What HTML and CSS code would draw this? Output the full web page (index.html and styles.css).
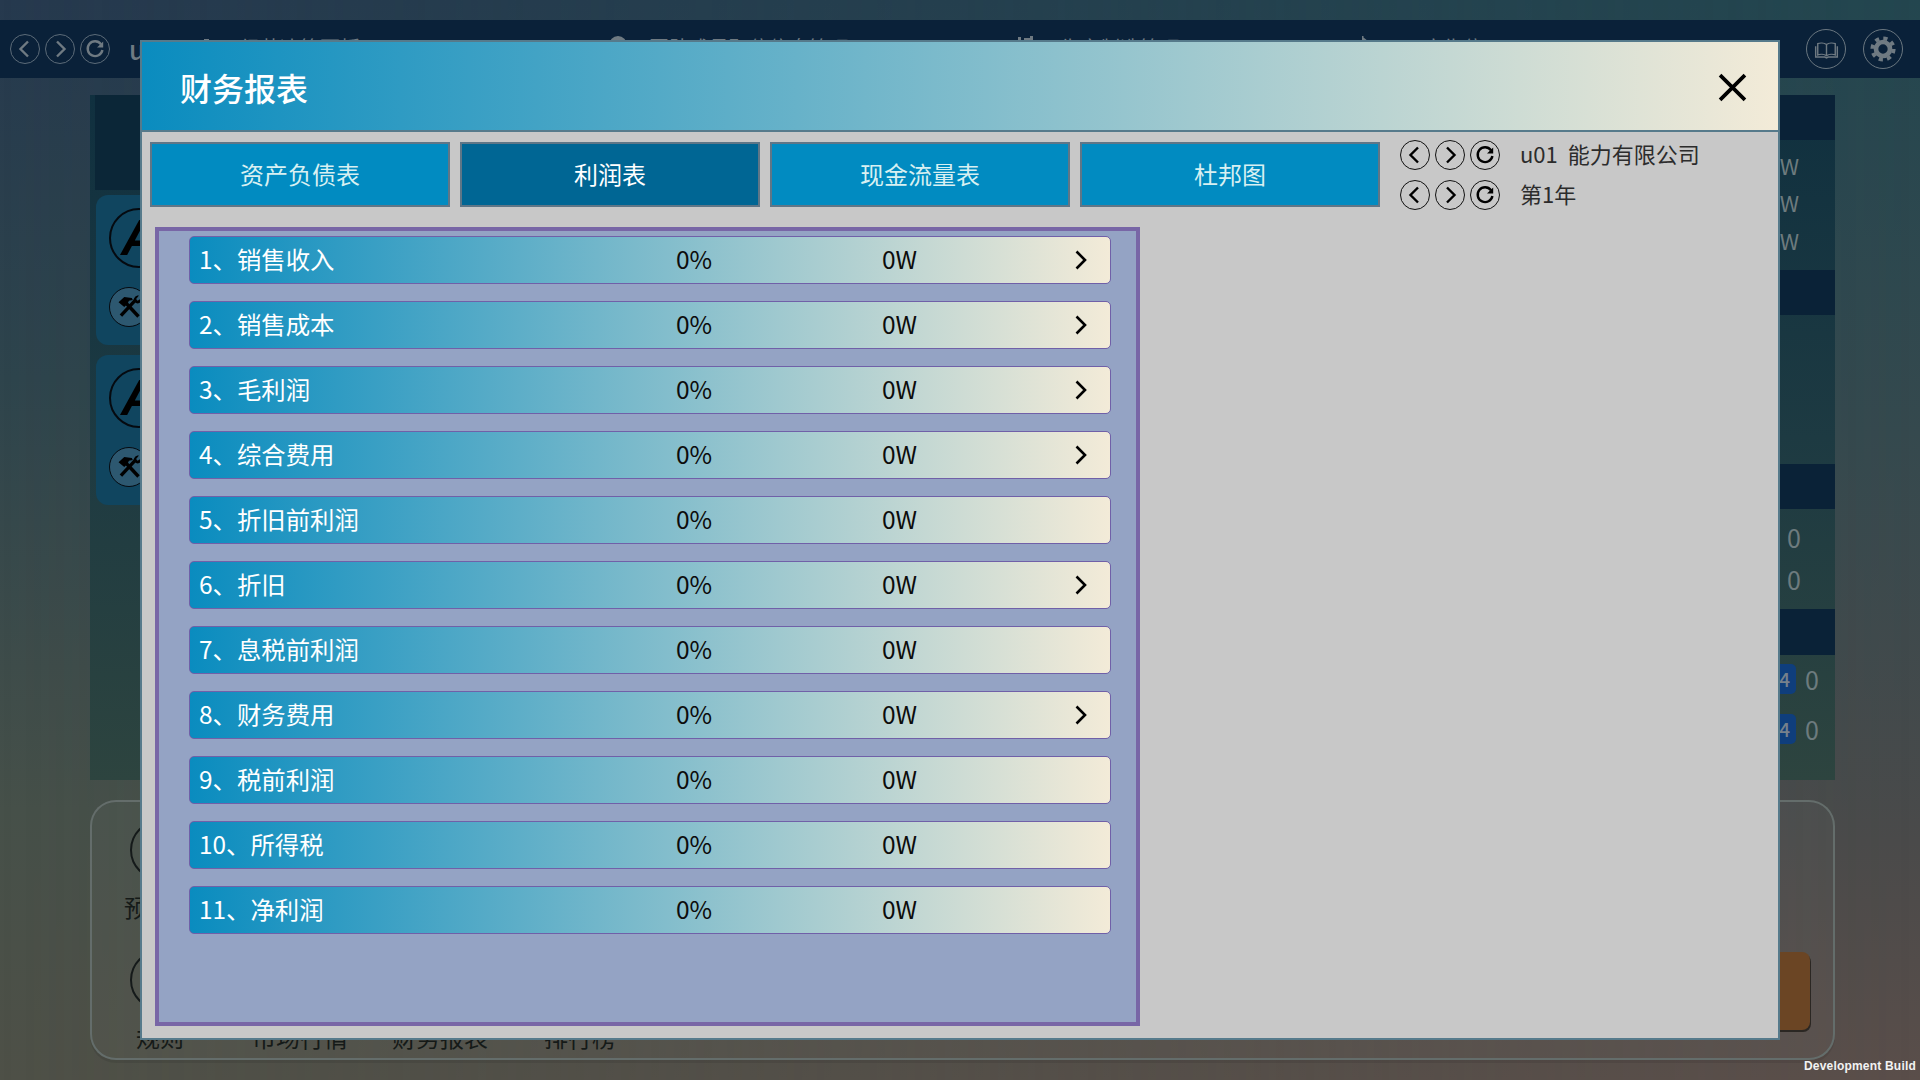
FILE: index.html
```html
<!DOCTYPE html>
<html lang="zh-CN">
<head>
<meta charset="utf-8">
<title>财务报表</title>
<link rel="stylesheet" href="styles.css">
</head>
<body>
<svg class="defs" width="0" height="0" aria-hidden="true">
  <symbol id="i-left" viewBox="0 0 30 30"><path d="M18 7.5 10.5 15 18 22.5" fill="none" stroke="currentColor" stroke-width="2.4"/></symbol>
  <symbol id="i-right" viewBox="0 0 30 30"><path d="M12 7.5 19.5 15 12 22.5" fill="none" stroke="currentColor" stroke-width="2.4"/></symbol>
  <symbol id="i-refresh" viewBox="0 0 30 30"><path d="M21 10.2A7.4 7.4 0 1 0 22.4 16" fill="none" stroke="currentColor" stroke-width="2.4"/><path d="M23.2 7.4V13.6H17Z" fill="currentColor"/></symbol>
  <symbol id="i-tools" viewBox="0 0 40 40"><path d="M9 15 15 9.500 23 10.500 24 12.500 20 13.500 18 17 15 20Z" fill="currentColor"/><path d="M16.500 15.500 30 30" fill="none" stroke="currentColor" stroke-width="3.600"/><path d="M27 12.500 11.500 29" fill="none" stroke="currentColor" stroke-width="3.600"/><path d="M30.500 8 27.500 11.500 29 13.500 32 11.500 33 13C32.500 16 29.500 17 27 15.500L25 13C25 10 27.500 7.500 30.500 8Z" fill="currentColor"/></symbol>
</svg>

<div class="stage">
  <div class="strip"></div>

  <header class="nav">
    <div class="nav-left">
      <span class="circle nav-circle"><svg class="ico"><use href="#i-left"/></svg></span>
      <span class="circle nav-circle"><svg class="ico"><use href="#i-right"/></svg></span>
      <span class="circle nav-circle"><svg class="ico"><use href="#i-refresh"/></svg></span>
    </div>
    <div class="nav-user">u01</div>
    <div class="nav-item">
      <svg class="nav-ico" viewBox="0 0 30 30"><path d="M8 12 12 8V6h5V8l5 4Z" fill="currentColor"/></svg><span>经营决策面板</span>
    </div>
    <div class="nav-item">
      <svg class="nav-ico" viewBox="0 0 30 30"><path d="M17 3a9 9 0 0 0-9 9h5a4 4 0 0 1 8 0h5a9 9 0 0 0-9-9Z" fill="currentColor"/></svg><span>团队成员职位信息管理</span>
    </div>
    <div class="nav-item">
      <svg class="nav-ico" viewBox="0 0 30 30"><path d="M0 14 3 7h3V4h3v3h3V5h6V3h3v4h5l4 7Z" fill="currentColor"/></svg><span>生产制造管理</span>
    </div>
    <div class="nav-item nav-item-last">
      <svg class="nav-ico" viewBox="0 0 30 30"><path d="M6 3h1.500v1.500l7 5.500H7.500v5H6Z" fill="currentColor"/></svg><span>广告位</span>
    </div>
    <div class="nav-right">
      <span class="circle nav-big">
        <svg class="book-ico" viewBox="0 0 30 30"><path d="M15 9C12 7 7 7 4.500 8V21.500C7 20.500 12 20.500 15 22.500 18 20.500 23 20.500 25.500 21.500V8C23 7 18 7 15 9ZM15 9V22.500M2 11V24H13L15 25 17 24H28V11" fill="none" stroke="currentColor" stroke-width="1.700"/></svg>
      </span>
      <span class="circle nav-big">
        <svg class="nav-big-ico" viewBox="0 0 30 30"><circle cx="15" cy="15" r="7.500" fill="none" stroke="currentColor" stroke-width="5"/><circle cx="15" cy="15" r="11.500" fill="none" stroke="currentColor" stroke-width="4" stroke-dasharray="4.500 4.530"/></svg>
      </span>
    </div>
  </header>

  <main class="board">
    <section class="col-left">
      <div class="left-head"></div>
      <div class="card">
        <span class="circle badge-a">A</span>
        <span class="circle badge-tool"><svg class="tool-ico"><use href="#i-tools"/></svg></span>
      </div>
      <div class="card">
        <span class="circle badge-a">A</span>
        <span class="circle badge-tool"><svg class="tool-ico"><use href="#i-tools"/></svg></span>
      </div>
    </section>
    <section class="col-right">
      <div class="band"></div>
      <div class="sect sect-w"><span>W</span><span>W</span><span>W</span></div>
      <div class="band"></div>
      <div class="sect sect-empty"></div>
      <div class="band"></div>
      <div class="sect sect-zero"><span>0</span><span>0</span></div>
      <div class="band band-last"></div>
      <div class="sect sect-badge">
        <div class="lvl"><span class="lvl-tag">4</span><span class="lvl-num">0</span></div>
        <div class="lvl"><span class="lvl-tag">4</span><span class="lvl-num">0</span></div>
      </div>
    </section>
  </main>

  <section class="dock">
    <div class="dock-grid">
      <div class="dock-row">
        <div class="dock-item"><span class="circle dock-circle"></span><span class="dock-label">预算表</span></div>
      </div>
      <div class="dock-row">
        <div class="dock-item"><span class="circle dock-circle"></span><span class="dock-label">规则</span></div>
        <div class="dock-item"><span class="circle dock-circle"></span><span class="dock-label">市场行情</span></div>
        <div class="dock-item"><span class="circle dock-circle"></span><span class="dock-label">财务报表</span></div>
        <div class="dock-item"><span class="circle dock-circle"></span><span class="dock-label">排行榜</span></div>
      </div>
    </div>
    <div class="dock-action"></div>
  </section>

  <div class="modal">
    <div class="modal-head">
      <h1 class="modal-title">财务报表</h1>
      <svg class="modal-close" viewBox="0 0 28 28"><path d="M2 2 26 26M26 2 2 26" fill="none" stroke="#000" stroke-width="3.600"/></svg>
    </div>
    <div class="modal-body">
      <div class="modal-top">
        <nav class="tabs">
          <div class="tab">资产负债表</div>
          <div class="tab tab-active">利润表</div>
          <div class="tab">现金流量表</div>
          <div class="tab">杜邦图</div>
        </nav>
        <div class="pickers">
          <div class="picker">
            <span class="circle pick-circle"><svg class="ico"><use href="#i-left"/></svg></span>
            <span class="circle pick-circle"><svg class="ico"><use href="#i-right"/></svg></span>
            <span class="circle pick-circle"><svg class="ico"><use href="#i-refresh"/></svg></span>
            <span class="pick-text">u01&nbsp;&nbsp;能力有限公司</span>
          </div>
          <div class="picker">
            <span class="circle pick-circle"><svg class="ico"><use href="#i-left"/></svg></span>
            <span class="circle pick-circle"><svg class="ico"><use href="#i-right"/></svg></span>
            <span class="circle pick-circle"><svg class="ico"><use href="#i-refresh"/></svg></span>
            <span class="pick-text">第1年</span>
          </div>
        </div>
      </div>
      <div class="report">
        <div class="row"><span class="row-name">1、销售收入</span><span class="row-val">0%</span><span class="row-val">0W</span><svg class="row-arrow" viewBox="0 0 12 20"><path d="M1.500 1.500 10 10 1.500 18.500" fill="none" stroke="#000" stroke-width="2.600"/></svg></div>
        <div class="row"><span class="row-name">2、销售成本</span><span class="row-val">0%</span><span class="row-val">0W</span><svg class="row-arrow" viewBox="0 0 12 20"><path d="M1.500 1.500 10 10 1.500 18.500" fill="none" stroke="#000" stroke-width="2.600"/></svg></div>
        <div class="row"><span class="row-name">3、毛利润</span><span class="row-val">0%</span><span class="row-val">0W</span><svg class="row-arrow" viewBox="0 0 12 20"><path d="M1.500 1.500 10 10 1.500 18.500" fill="none" stroke="#000" stroke-width="2.600"/></svg></div>
        <div class="row"><span class="row-name">4、综合费用</span><span class="row-val">0%</span><span class="row-val">0W</span><svg class="row-arrow" viewBox="0 0 12 20"><path d="M1.500 1.500 10 10 1.500 18.500" fill="none" stroke="#000" stroke-width="2.600"/></svg></div>
        <div class="row"><span class="row-name">5、折旧前利润</span><span class="row-val">0%</span><span class="row-val">0W</span></div>
        <div class="row"><span class="row-name">6、折旧</span><span class="row-val">0%</span><span class="row-val">0W</span><svg class="row-arrow" viewBox="0 0 12 20"><path d="M1.500 1.500 10 10 1.500 18.500" fill="none" stroke="#000" stroke-width="2.600"/></svg></div>
        <div class="row"><span class="row-name">7、息税前利润</span><span class="row-val">0%</span><span class="row-val">0W</span></div>
        <div class="row"><span class="row-name">8、财务费用</span><span class="row-val">0%</span><span class="row-val">0W</span><svg class="row-arrow" viewBox="0 0 12 20"><path d="M1.500 1.500 10 10 1.500 18.500" fill="none" stroke="#000" stroke-width="2.600"/></svg></div>
        <div class="row"><span class="row-name">9、税前利润</span><span class="row-val">0%</span><span class="row-val">0W</span></div>
        <div class="row"><span class="row-name">10、所得税</span><span class="row-val">0%</span><span class="row-val">0W</span></div>
        <div class="row"><span class="row-name">11、净利润</span><span class="row-val">0%</span><span class="row-val">0W</span></div>
      </div>
    </div>
  </div>

  <div class="dev-build">Development Build</div>
</div>
</body>
</html>
```

FILE: styles.css
```css
* { box-sizing: border-box; }
html, body { margin: 0; padding: 0; }
body { font-family: "Noto Sans CJK SC", "Noto Sans", sans-serif; line-height: 1; }
.defs { position: absolute; }

.stage {
  position: relative;
  isolation: isolate;
  width: 1920px;
  height: 1080px;
  overflow: hidden;
  display: flex;
  flex-direction: column;
  background: linear-gradient(180deg, #26394e 0%, #2e444c 35%, #465049 75%, #4e5047 100%);
}
.stage::before {
  content: "";
  position: absolute;
  inset: 0;
  z-index: -1;
  background: linear-gradient(180deg, #23464f 0%, #35494e 40%, #4a4a4a 78%, #5a4e4a 100%);
  -webkit-mask-image: linear-gradient(90deg, transparent, #000);
  mask-image: linear-gradient(90deg, transparent, #000);
}

.strip { height: 20px; flex: none; }

.circle {
  display: flex;
  align-items: center;
  justify-content: center;
  border-radius: 50%;
  flex: none;
}
.ico { width: 30px; height: 30px; display: block; flex: none; }

/* top bar */
.nav {
  flex: none;
  height: 58px;
  background: #0a2139;
  color: #6f7a82;
  display: grid;
  grid-template-columns: 129px 63px 409px 411px 344px 1fr auto;
  align-items: center;
}
.nav-left { display: flex; gap: 5px; padding-left: 10px; }
.nav-circle { width: 30px; height: 30px; border: 1px solid #5c6b78; margin: -1px 0 0; }
.nav-user { font-size: 26px; font-weight: 500; }
.nav-item { display: flex; align-items: center; gap: 18px; font-size: 20px; margin-top: -2px; }
.nav-item-last { gap: 37px; }
.nav-ico { width: 30px; height: 30px; flex: none; align-self: flex-start; margin-top: -1px; }
.nav-right { display: flex; gap: 17px; padding-right: 17px; grid-column: 7; }
.nav-big { width: 40px; height: 40px; border: 1px solid #6a7780; }
.nav-big-ico { width: 28px; height: 28px; }
.book-ico { width: 25px; height: 25px; }

/* main board behind the dialog */
.board {
  flex: none;
  margin: 17px 85px 0 90px;
  height: 685px;
  display: flex;
  background: linear-gradient(180deg, #10303f 0%, #1d3a42 50%, #2d443f 100%);
}
.col-left { flex: 1; padding: 0 0 0 5px; }
.left-head { height: 95px; background: #0b2637; margin-bottom: 5px; }
.card {
  margin: 0 0 10px 1px;
  width: 500px;
  height: 150px;
  padding: 13px;
  background: #10455f;
  border-radius: 12px;
  display: flex;
  flex-direction: column;
  gap: 19px;
}
.badge-a {
  width: 60px;
  height: 60px;
  border: 2px solid #050a10;
  color: #000;
  font: italic bold 50px "Liberation Sans", sans-serif;
}
.badge-tool {
  width: 40px;
  height: 40px;
  border: 1px solid #050a10;
  background: #2d5870;
  color: #000;
}
.tool-ico { width: 38px; height: 38px; display: block; flex: none; }

.col-right { width: 300px; display: flex; flex-direction: column; color: #6d7b7e; }
.band { height: 45px; background: #0a2237; flex: none; }
.band-last { height: 46px; }
.sect { display: flex; flex-direction: column; justify-content: center; align-items: flex-end; }
.sect-w { height: 130px; padding: 0 36px 4px 0; font-size: 22px; line-height: 37.5px; }
.sect-empty { height: 149px; }
.sect-zero { height: 100px; padding: 0 34px 2px 0; font-size: 25px; line-height: 42px; }
.sect-badge { height: 124px; padding: 9px 16px 0 0; justify-content: flex-start; gap: 20px; }
.lvl { display: flex; align-items: center; gap: 9px; }
.lvl-tag {
  width: 30px;
  height: 30px;
  line-height: 30px;
  padding-right: 6px;
  text-align: right;
  font-size: 19px;
  font-weight: 500;
  border-radius: 5px;
  background: #0f3e7c;
  color: #77818c;
}
.lvl-num { font-size: 25px; }

/* bottom dock */
.dock {
  flex: none;
  margin: 20px 85px 0 90px;
  height: 260px;
  padding: 20px 25px 0 0;
  border-radius: 26px;
  box-shadow: inset 0 0 0 2px #646d6b, 0 3px 0 rgba(0,0,0,.08);
  background: rgba(255,255,255,.025);
  display: flex;
  justify-content: space-between;
}
.dock-grid { display: flex; flex-direction: column; gap: 27px; }
.dock-row { display: flex; height: 103px; }
.dock-item { width: 140px; display: flex; flex-direction: column; align-items: center; gap: 13px; }
.dock-circle { width: 60px; height: 60px; border: 2px solid #151a1a; }
.dock-label { font-size: 24px; line-height: 28px; color: #151a18; white-space: nowrap; }
.dock-action {
  align-self: flex-end;
  width: 200px;
  height: 78px;
  margin-bottom: 30px;
  background: #6b4524;
  border-radius: 8px;
  box-shadow: 1px 2px 0 #2b2723;
}

/* dialog */
.modal {
  position: absolute;
  left: 140px;
  top: 40px;
  width: 1640px;
  height: 1000px;
  border: 2px solid #567a8b;
  background: #c8c8c8;
  display: flex;
  flex-direction: column;
}
.modal-head {
  flex: none;
  height: 90px;
  border-bottom: 2px solid #567a8b;
  background: linear-gradient(90deg, #0a8cbf 0%, #f3ebd8 100%);
  display: flex;
  align-items: center;
  justify-content: space-between;
  padding: 0 31px 0 38px;
}
.modal-title { margin: 0 0 -1px; font-size: 32px; font-weight: 500; color: #fff; line-height: 1; }
.modal-close { width: 29px; height: 29px; margin-top: 3px; }
.modal-body { flex: 1; padding: 10px 0 0 8px; }
.modal-top { display: flex; align-items: flex-start; }
.tabs { display: flex; gap: 10px; }
.tab {
  width: 300px;
  height: 65px;
  padding-bottom: 2px;
  border: 2px solid #5f7687;
  background: #018bc1;
  color: #d8f0f2;
  font-size: 24px;
  display: flex;
  align-items: center;
  justify-content: center;
}
.tab-active { background: #006694; color: #fff; }
.pickers { margin: -2px 0 0 20px; display: flex; flex-direction: column; gap: 10px; }
.picker { display: flex; align-items: center; gap: 5px; color: #000; }
.pick-circle { width: 30px; height: 30px; border: 1px solid #111; }
.pick-text { margin: 0 0 4px 15px; font-size: 22px; color: #2c2c2c; white-space: nowrap; }

.report {
  margin: 17px 0 0 5px;
  width: 985px;
  height: 799px;
  padding: 5px 0 0 30px;
  border: 4px solid #7866a6;
  background: #94a3c4;
  display: flex;
  flex-direction: column;
  gap: 17px;
}
.row {
  flex: none;
  width: 922px;
  height: 48px;
  border: 1px solid #7060a8;
  border-radius: 5px;
  background: linear-gradient(90deg, #0a8cbf 0%, #f3ebd8 100%);
  display: grid;
  grid-template-columns: 477px 206px 1fr 13px;
  align-items: center;
  padding: 0 22px 2px 9px;
}
.row-name { font-size: 24.4px; color: #fff; white-space: nowrap; }
.row-val { font-size: 24.5px; color: #0c0c0c; }
.row-arrow { width: 12px; height: 20px; grid-column: 4; margin-top: 2px; }

.dev-build {
  position: absolute;
  right: 4px;
  bottom: 7px;
  font: bold 12px "Liberation Sans", sans-serif;
  letter-spacing: .2px;
  color: #f2f2f2;
}
```
